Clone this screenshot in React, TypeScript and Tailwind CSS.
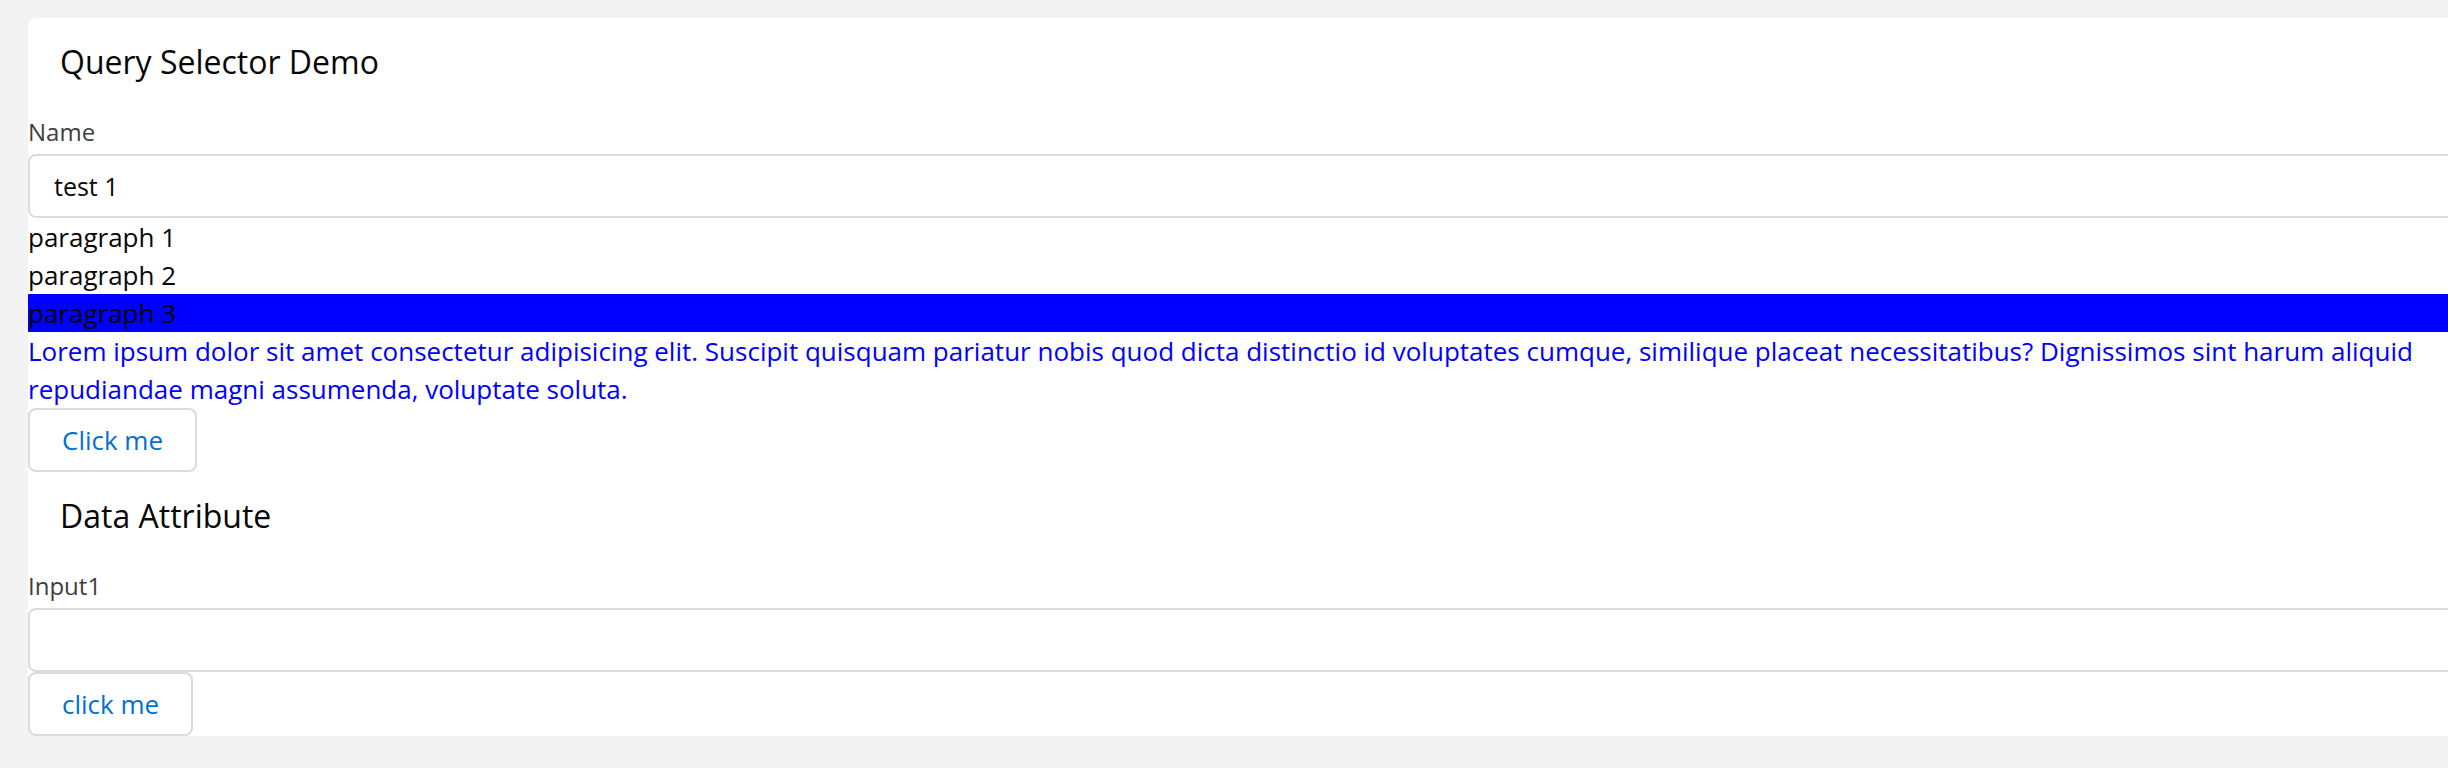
import React from "react";

export default function App() {
  return (
    <div
      className="min-h-[768px] w-full overflow-hidden bg-[#f3f3f3] pt-[18px] pl-[28px]"
      style={{ fontFamily: '"Open Sans", "Noto Sans", sans-serif' }}
    >
      <div className="w-[2460px] rounded-[8px] bg-white text-[#080707]">
        <section>
          <header className="px-8 pt-6 mb-6">
            <h2 className="text-[32px] leading-[40px]">Query Selector Demo</h2>
          </header>
          <div>
            <label className="block pt-2 mb-1 text-[24px] leading-[36px] text-[#3e3e3c]">
              Name
            </label>
            <input
              readOnly
              value="test 1"
              className="block h-16 w-full rounded-[8px] border-2 border-[#dddbda] bg-white pl-6 pr-8 text-[25px] leading-[60px] text-[#080707] outline-none"
            />
          </div>
          <div className="text-[26px] leading-[38px]">
            <p>paragraph 1</p>
            <p>paragraph 2</p>
            <p className="bg-[#0000ff] text-black">paragraph 3</p>
            <p className="text-[#0000ff]">
              Lorem ipsum dolor sit amet consectetur adipisicing elit. Suscipit quisquam pariatur nobis quod dicta
              distinctio id voluptates cumque, similique placeat necessitatibus? Dignissimos sint harum aliquid
              repudiandae magni assumenda, voluptate soluta.
            </p>
          </div>
          <button className="block h-16 rounded-[8px] border-2 border-[#dddbda] bg-white px-8 text-[26px] leading-[60px] text-[#0070d2]">
            Click me
          </button>
        </section>
        <section>
          <header className="px-8 pt-6 mb-6">
            <h2 className="text-[32px] leading-[40px]">Data Attribute</h2>
          </header>
          <div>
            <label className="block pt-2 mb-1 text-[24px] leading-[36px] text-[#3e3e3c]">
              Input1
            </label>
            <input
              className="block h-16 w-full rounded-[8px] border-2 border-[#dddbda] bg-white pl-6 pr-8 text-[25px] leading-[60px] text-[#080707] outline-none"
            />
          </div>
          <button className="block h-16 rounded-[8px] border-2 border-[#dddbda] bg-white px-8 text-[26px] leading-[60px] text-[#0070d2]">
            click me
          </button>
        </section>
      </div>
    </div>
  );
}
